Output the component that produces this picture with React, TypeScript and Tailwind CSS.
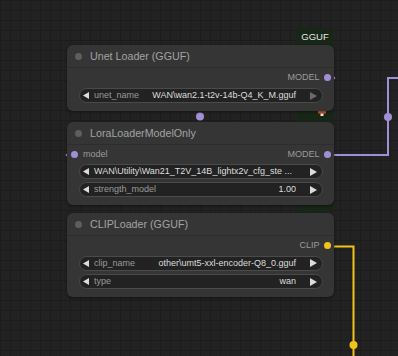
import type { ReactNode } from 'react'

const FONT = { fontFamily: '"Liberation Sans", Arial, sans-serif' }

function LeftArrow() {
  return (
    <svg width="6" height="7" viewBox="0 0 6 7" className="shrink-0">
      <path d="M6 0 L0 3.5 L6 7 Z" fill="#dcdcdc" />
    </svg>
  )
}

function RightArrow({ dim }: { dim?: boolean }) {
  return (
    <svg width="7" height="8" viewBox="0 0 7 8" className="shrink-0">
      <path d="M0 0 L7 4 L0 8 Z" fill={dim ? '#6a6a6a' : '#dcdcdc'} />
    </svg>
  )
}

interface WidgetProps {
  label?: string
  value: string
  dim?: boolean
}

function Widget({ label, value, dim }: WidgetProps) {
  return (
    <div className="ml-[12px] mr-[11px] h-[15px] rounded-full border border-[#4a4a4a] bg-[#222222] flex items-center pl-[3px] pr-[5px] text-[9px] leading-none">
      <LeftArrow />
      {label && <span className="ml-[5px] text-[#9a9a9a] whitespace-nowrap">{label}</span>}
      <span
        className={`flex-1 whitespace-nowrap text-[#dddddd] ${label ? 'text-right' : 'ml-[5px] text-left'}`}
      >
        {value}
      </span>
      <span className="ml-[14px] flex">
        <RightArrow dim={dim} />
      </span>
    </div>
  )
}

function OutputRow({ name, color }: { name: string; color: string }) {
  return (
    <div className="h-[15px] flex items-center justify-end pr-[3.5px] text-[9px] leading-none text-[#9a9a9a]">
      <span>{name}</span>
      <span className={`ml-[4px] w-[7px] h-[7px] rounded-full ${color}`} />
    </div>
  )
}

interface NodeProps {
  title: string
  pos: string
  children: ReactNode
}

function Node({ title, pos, children }: NodeProps) {
  return (
    <div
      className={`absolute left-[67px] w-[267px] rounded-[6px] bg-[#353535] shadow-[0_1px_3px_rgba(0,0,0,0.45)] ${pos}`}
    >
      <div className="h-[23px] flex items-center pl-[8px] border-b border-[#2d2d2d] box-border">
        <span className="w-[7px] h-[7px] rounded-full bg-[#5e5e5e]" />
        <span className="ml-[8px] text-[10.7px] leading-none text-[#a3a3a3]">{title}</span>
      </div>
      <div className="pt-[2px] pb-[8px] flex flex-col">{children}</div>
    </div>
  )
}

export default function App() {
  return (
    <div
      style={FONT}
      className="relative w-[398px] h-[356px] overflow-hidden bg-[#222222] bg-[linear-gradient(#1c1c1c_1px,transparent_1px),linear-gradient(90deg,#1c1c1c_1px,transparent_1px)] [background-size:10px_10px]"
    >
      {/* green GGUF node behind */}
      <div className="absolute left-[297px] top-[28px] w-[36px] h-[184px] rounded-[5px] bg-[#172617] flex justify-center pt-[4px]">
        <span className="text-[9.5px] leading-none text-[#e8e8e8]">GGUF</span>
      </div>

      {/* links */}
      <svg className="absolute inset-0" width="398" height="356">
        <path d="M330 155 H388 V78 H398" fill="none" stroke="#a18fd6" strokeWidth="2" />
        <circle cx="388" cy="117" r="4" fill="#a18fd6" />
        <circle cx="334" cy="78" r="1.3" fill="#a18fd6" />
        <circle cx="67" cy="155" r="1.3" fill="#a18fd6" />
        <circle cx="200" cy="116.5" r="4" fill="#a18fd6" />
        <path d="M330 246.5 H353.5 V356" fill="none" stroke="#f0c419" strokeWidth="2" />
        <circle cx="353.5" cy="345" r="4" fill="#f0c419" />
        <g>
          <rect x="318" y="111" width="8" height="2.5" fill="#d2541e" />
          <rect x="320.5" y="113.5" width="3" height="2.5" fill="#f1e3dc" />
        </g>
      </svg>

      <Node title="Unet Loader (GGUF)" pos="top-[45px]">
        <OutputRow name="MODEL" color="bg-[#a18fd6]" />
        <div className="mt-[3px]">
          <Widget label="unet_name" value="WAN\wan2.1-t2v-14b-Q4_K_M.gguf" dim />
        </div>
      </Node>

      <Node title="LoraLoaderModelOnly" pos="top-[122px]">
        <div className="h-[15px] flex items-center justify-between pl-[4px] pr-[3.5px] text-[9px] leading-none text-[#9a9a9a]">
          <div className="flex items-center">
            <span className="w-[7px] h-[7px] rounded-full bg-[#a18fd6]" />
            <span className="ml-[5px]">model</span>
          </div>
          <div className="flex items-center">
            <span>MODEL</span>
            <span className="ml-[4px] w-[7px] h-[7px] rounded-full bg-[#a18fd6]" />
          </div>
        </div>
        <div className="mt-[2px] flex flex-col gap-[3px]">
          <Widget value="WAN\Utility\Wan21_T2V_14B_lightx2v_cfg_ste ..." />
          <Widget label="strength_model" value="1.00" />
        </div>
      </Node>

      <Node title="CLIPLoader (GGUF)" pos="top-[213px]">
        <OutputRow name="CLIP" color="bg-[#f0c419]" />
        <div className="mt-[2.5px] flex flex-col gap-[3.5px]">
          <Widget label="clip_name" value="other\umt5-xxl-encoder-Q8_0.gguf" />
          <Widget label="type" value="wan" />
        </div>
      </Node>
    </div>
  )
}
